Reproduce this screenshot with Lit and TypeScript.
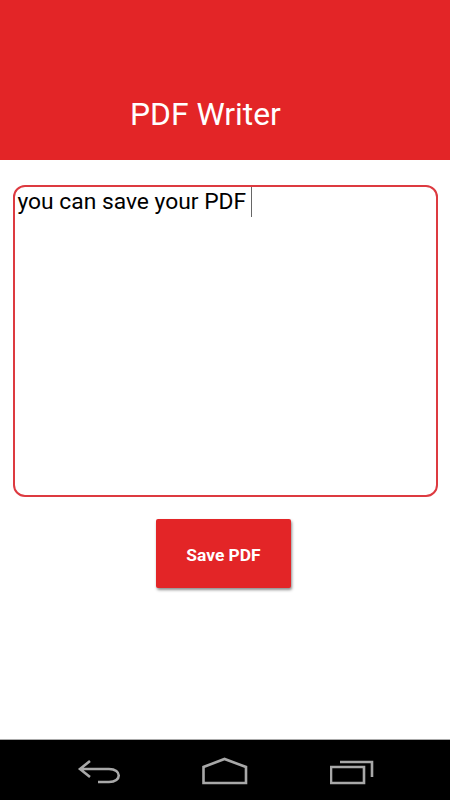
import { LitElement, html, css } from "lit";
import { customElement } from "lit/decorators.js";

@customElement("app-root")
export class AppRoot extends LitElement {
  static styles = css`
    :host { display: block; width: 450px; height: 800px; font-family: Roboto, sans-serif; background: #fff; }
    .page { width: 450px; height: 800px; display: flex; flex-direction: column; }
    .bar { height: 160px; flex: none; background: #e32527; box-sizing: border-box; padding: 96px 0 0 130px; color: #fff; font-size: 31.8px; line-height: 36px; }
    .main { flex: 1; display: flex; flex-direction: column; align-items: flex-start; padding: 25px 0 0 12.5px; min-height: 0; }
    .editor { box-sizing: border-box; width: 425px; height: 312px; border: 2.5px solid #dd3a40; border-radius: 12px; padding: 0 0 0 3px; color: #000; font-size: 22.8px; line-height: 30px; }
    .text { display: inline-block; padding-right: 5px; border-right: 1px solid #666; line-height: 30px; }
    .btn { margin: 22px 0 0 143.5px; width: 135px; height: 69px; background: #e32527; border-radius: 2px; border: 0; color: #fff; font: 700 17.4px Roboto, sans-serif; box-shadow: 1px 2px 3px rgba(0,0,0,.45); padding: 2px 0 0; }
    .nav { height: 61px; flex: none; background: #000; border-top: 1px solid #aaa; box-sizing: border-box; display: grid; grid-template-columns: 200px 130px 120px; }
    .nav div { display: flex; align-items: flex-start; }
    svg { display: block; fill: none; stroke: #a8a8a8; stroke-width: 2.6; }
  `;
  render() {
    return html`<div class="page">
      <div class="bar">PDF Writer</div>
      <div class="main">
        <div class="editor"><span class="text">you can save your PDF</span></div>
        <button class="btn">Save PDF</button>
      </div>
      <div class="nav">
        <div><svg width="200" height="60" viewBox="0 0 200 60"><path d="M90 21 L80 29 L90 37 M80 29 H109 C122 29 122 42 109 42 H98"/></svg></div>
        <div><svg width="130" height="60" viewBox="0 0 130 60"><path d="M3.5 43 V27 L24.5 19 L46 27 V43 Z"/></svg></div>
        <div><svg width="120" height="60" viewBox="0 0 120 60"><path d="M1 43 H34 V27 H1 Z M10 22 H42 V37"/></svg></div>
      </div>
    </div>`;
  }
}
